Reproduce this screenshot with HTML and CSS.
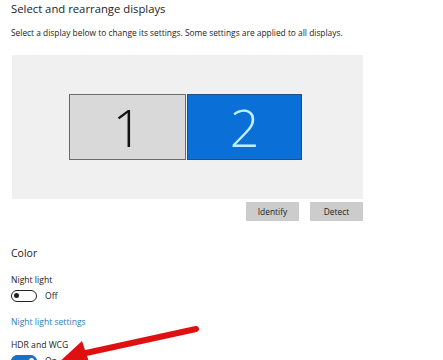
FILE: index.html
```html
<!DOCTYPE html>
<html>
<head>
    <meta charset="UTF-8">
    <title>Display</title>
    <link rel="stylesheet" href="styles.css">
</head>
<body>
<div class="page">
    <h2 class="title">Select and rearrange displays</h2>
    <p class="hint">Select a display below to change its settings. Some settings are applied to all displays.</p>
    <div class="panel">
        <div class="monitors">
            <div class="monitor">1</div>
            <div class="monitor selected">2</div>
        </div>
    </div>
    <div class="actions">
        <button class="btn">Identify</button>
        <button class="btn">Detect</button>
    </div>

    <h2 class="section">Color</h2>
    <div class="label">Night light</div>
    <div class="toggle-row">
        <span class="toggle"><span class="knob"></span></span>
        <span class="state">Off</span>
    </div>
    <a class="link" href="#">Night light settings</a>
    <div class="label hdr">HDR and WCG</div>
    <div class="toggle-row">
        <span class="toggle on"><span class="knob"></span></span>
        <span class="state">On</span>
    </div>
</div>
<svg class="arrow" width="443" height="360" viewBox="0 0 443 360">
    <line x1="196" y1="329" x2="86" y2="353" stroke="#e01010" stroke-width="6" stroke-linecap="round"/>
    <polygon points="56,365 82,341 92,371" fill="#e01010"/>
</svg>
</body>
</html>
```

FILE: styles.css
```css
body {
    margin: 0;
    background: #fff;
    font-family: "Open Sans", sans-serif;
    color: #222;
    overflow: hidden;
}
.page {
    padding: 0 0 0 11px;
    width: 352px;
}
.title {
    margin: 0;
    padding-top: 1px;
    font-size: 11.3px;
    font-weight: normal;
    line-height: 16px;
}
.hint {
    margin: 10px 0 0;
    font-size: 8.4px;
    line-height: 12px;
}
.panel {
    margin: 16px 0 0 1px;
    height: 144px;
    background: #f0f0f0;
    display: flex;
    align-items: center;
    padding-left: 57px;
}
.monitors {
    display: flex;
}
.monitor {
    width: 115px;
    height: 64px;
    border: 1px solid #6b6b6b;
    background: #d9d9d9;
    display: flex;
    align-items: center;
    justify-content: center;
    font-size: 52px;
    font-weight: 300;
    line-height: 1;
    color: #111;
    font-family: "Open Sans", sans-serif;
}
.monitor.selected {
    width: 113px;
    margin-left: 1px;
    background: #0a6fd6;
    border-color: #1f4f8a;
    color: #bfeeff;
}
.actions {
    display: flex;
    justify-content: flex-end;
    gap: 11px;
    margin-top: 3px;
    width: 352px;
}
.btn {
    width: 53px;
    height: 19px;
    border: none;
    background: #cccccc;
    font-family: "Open Sans", sans-serif;
    font-size: 8.4px;
    color: #222;
    padding: 0;
}
.section {
    margin: 24px 0 0;
    font-size: 10.5px;
    font-weight: normal;
    line-height: 16px;
}
.label {
    margin-top: 13px;
    font-size: 8.6px;
    line-height: 12px;
}
.label.hdr {
    margin-top: 11px;
}
.toggle-row {
    display: flex;
    align-items: center;
    gap: 8px;
    margin-top: 3px;
    height: 13px;
}
.toggle {
    box-sizing: border-box;
    width: 26px;
    height: 12px;
    border: 1.6px solid #222;
    border-radius: 6px;
    display: flex;
    align-items: center;
    padding-left: 2px;
}
.knob {
    width: 5px;
    height: 5px;
    border-radius: 50%;
    background: #222;
}
.toggle.on {
    background: #1a6fc8;
    border-color: #1a6fc8;
    justify-content: flex-end;
    padding-right: 2px;
}
.toggle.on .knob {
    background: #fff;
}
.state {
    font-size: 8.6px;
}
.link {
    display: block;
    margin-top: 14px;
    font-size: 8.6px;
    line-height: 12px;
    color: #2f7db3;
    text-decoration: none;
}
.arrow {
    position: absolute;
    left: 0;
    top: 0;
}
```
